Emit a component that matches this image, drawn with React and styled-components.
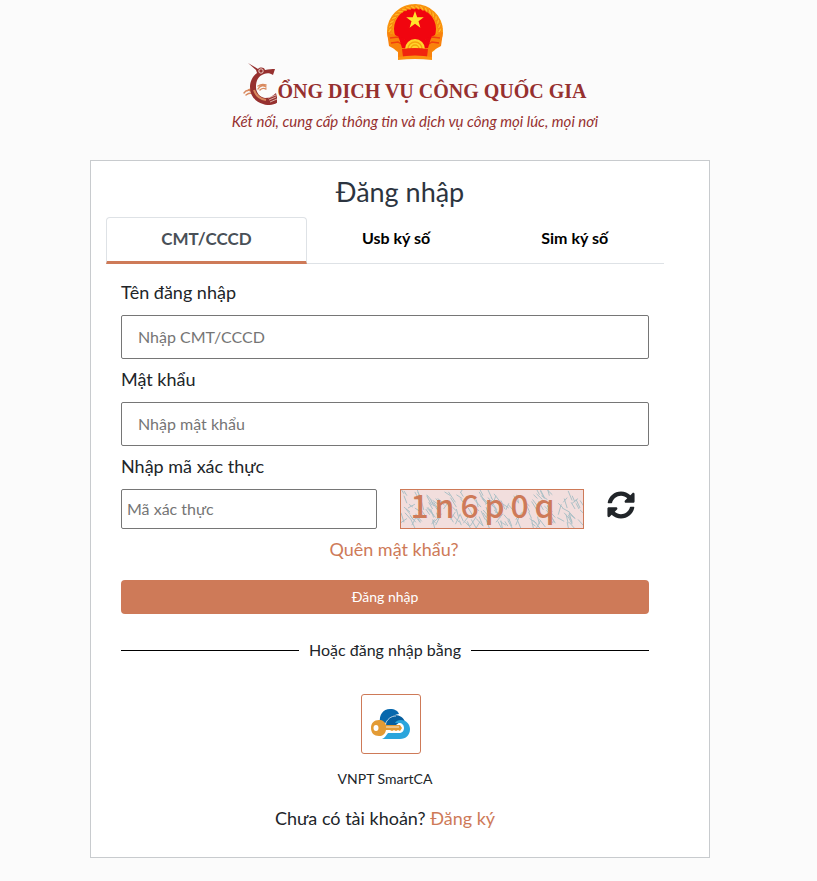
import React, { useState } from 'react'
import styled, { createGlobalStyle } from 'styled-components'
import { FaSyncAlt } from 'react-icons/fa'

const tabs = ['CMT/CCCD', 'Usb ký số', 'Sim ký số']
const captcha = '1n6p0q'

// short strokes scattered behind the captcha letters
const rand = (n) => {
  const v = Math.sin(n * 12.9898) * 43758.5453
  return v - Math.floor(v)
}
const scratches = Array.from({ length: 170 }, (_, i) => {
  const x = Math.round(rand(i + 1) * 182)
  const y = Math.round(rand(i + 301) * 38) - 3
  const dx = Math.round(2 + rand(i + 601) * 5)
  const dy = Math.round(3 + rand(i + 901) * 8)
  return `M${x} ${y}l${i % 7 === 0 ? -dx : dx} ${dy}`
}).join('')

// ears of rice on both sides of the emblem
const grains = Array.from({ length: 26 }, (_, i) => {
  const a = ((140 + i * 10.4) * Math.PI) / 180
  return { x: 29 + 25 * Math.cos(a), y: 28 + 24 * Math.sin(a), r: 140 + i * 10.4 }
})

const Emblem = () => (
  <svg width="58" height="58" viewBox="0 0 58 58" role="img" aria-label="Quốc huy">
    <ellipse cx="29" cy="28" rx="28" ry="27" fill="#fb9a0d" />
    <circle cx="29" cy="26" r="21" fill="#f1050f" />
    {grains.map((g, i) => (
      <ellipse
        key={i}
        cx={g.x}
        cy={g.y}
        rx="1.2"
        ry="3"
        fill="#ffbb22"
        stroke="#f47b10"
        strokeWidth=".7"
        transform={`rotate(${g.r + 35} ${g.x} ${g.y})`}
      />
    ))}
    <path d="M1 29l8 3 10 5 2 9h16l2-9 10-5 8-3-2 14-9 5v7l-17-2-17 2v-7l-9-5z" fill="#f9820c" />
    <path d="M4 35l8-1 8 6M5 40l7-1 8 5M54 35l-8-1-8 6M53 40l-7-1-8 5" fill="none" stroke="#f1400e" strokeWidth="1.4" />
    <path d="M12 32l9 6v7h-5zM46 32l-9 6v7h5z" fill="#f1050f" />
    <path d="M19 46a10 10 0 1 1 20 0z" fill="#ffd42a" />
    <path d="M22 46a7 7 0 1 1 14 0M25 46a4 4 0 1 1 8 0" fill="none" stroke="#f6a30d" strokeWidth="1.4" />
    <path d="M16 46q13-2 26 0l-1 8q-12-2-24 0z" fill="#f1260e" />
    <path d="M12 54q17-3 34 0v3q-17-2-34 0z" fill="#fb9310" />
    <path d="M29 8l2.2 6.300h6.600l-5.300 4 1.900 6.400-5.400-3.900-5.400 3.900 1.900-6.400-5.300-4h6.600z" fill="#ffe52c" />
  </svg>
)

const BirdLogo = () => (
  <svg width="34" height="42" viewBox="0 0 34 42" aria-hidden="true">
    <g fill="none" stroke="#d98a5f" strokeWidth="1.4" strokeLinecap="round">
      <path d="M1 30c2-3 5-3 7-2M3 32c2-2 4-2 6-2M4 28c2-2 4-2 5-1M15 26c2-4 6-4 8-2M15 23c3-2 5-2 8-1M17 27c2-2 4-2 6-1" />
    </g>
    <path d="M5 0l10 6c2-2 6-2 7 1 4-1 7-1 10-1l-2 6c-3-2-6-2-9-1-6 2-8 7-8 13 0 6 4 10 9 11 4 0 8-2 11-5l2 9c-4 3-10 4-15 2C11 38 7 32 7 24c0-6 3-11 7-14l-1-3z" fill="#96302f" />
    <circle cx="18" cy="8" r="2.2" fill="none" stroke="#f5dfd5" strokeWidth=".9" />
    <path d="M11 27c2 6 6 9 12 10" fill="none" stroke="#d98a5f" strokeWidth="2" />
    <path d="M25 35l8-3M26 37l7-3M27 39l7-3" fill="none" stroke="#f5dfd5" strokeWidth=".7" />
  </svg>
)

const SmartCaIcon = () => (
  <svg width="40" height="34" viewBox="0 0 40 34" aria-hidden="true">
    <path d="M9 15C8 8 12 2 19 2c5 0 8 2 9 5-7 1-10 5-11 10z" fill="#0768ad" />
    <path d="M15 18c1-6 4-9 9-10 5 0 9 3 10 7-3-1-6 0-9 3z" fill="#075f9f" />
    <path d="M14 18c2-6 6-9 11-9" fill="none" stroke="#fff" strokeWidth=".7" />
    <path d="M30 13c5 0 9 4 9 9 0 6-4 10-10 10H11c3-1 4-4 6-6h11c3 0 5-2 5-5s-2-5-5-5h-4c1-2 3-3 6-3z" fill="#2ba5dc" />
    <path d="M8 13c4 0 6 2 7 5h14l2 3-2 3-2-1-2 1-2-1-2 1-2-1h-4c-1 4-3 6-7 6-5 0-8-3-8-8s3-8 8-8zM5 18a2.5 3 0 1 0 0 6 2.5 3 0 0 0 0-6z" fill="#e39b35" />
    <path d="M15 20h13" stroke="#fff" strokeWidth=".8" />
  </svg>
)

export const App = () => {
  const [active, setActive] = useState(0)

  return (
    <Page>
      <GlobalStyle />
      <Header>
        <Emblem />
        <Brand>
          <BirdLogo />
          <BrandName>ỔNG DỊCH VỤ CÔNG QUỐC GIA</BrandName>
        </Brand>
        <Slogan>Kết nối, cung cấp thông tin và dịch vụ công mọi lúc, mọi nơi</Slogan>
      </Header>

      <Card>
        <Title>Đăng nhập</Title>
        <Panel>
          <TabList role="tablist">
            {tabs.map((tab, i) => (
              <Tab
                key={tab}
                type="button"
                role="tab"
                aria-selected={active === i}
                $active={active === i}
                onClick={() => setActive(i)}
              >
                {tab}
              </Tab>
            ))}
          </TabList>

          <Form onSubmit={(e) => e.preventDefault()}>
            <Label htmlFor="username">Tên đăng nhập</Label>
            <Input id="username" type="text" placeholder="Nhập CMT/CCCD" />
            <Label htmlFor="password">Mật khẩu</Label>
            <Input id="password" type="password" placeholder="Nhập mật khẩu" />
            <Label htmlFor="captcha">Nhập mã xác thực</Label>
            <CaptchaRow>
              <CaptchaInput id="captcha" type="text" placeholder="Mã xác thực" />
              <Captcha>
                <Noise viewBox="0 0 184 40" preserveAspectRatio="none" aria-hidden="true">
                  <path d={scratches} />
                </Noise>
                {captcha.split('').map((c, i) => (
                  <CaptchaChar key={i}>{c}</CaptchaChar>
                ))}
              </Captcha>
              <Refresh type="button" aria-label="Đổi mã">
                <FaSyncAlt size={28} />
              </Refresh>
            </CaptchaRow>

            <Forgot>
              <Link href="#forgot">Quên mật khẩu?</Link>
            </Forgot>
            <Submit type="submit">Đăng nhập</Submit>

            <Divider>Hoặc đăng nhập bằng</Divider>

            <Provider>
              <ProviderButton type="button" aria-label="VNPT SmartCA">
                <SmartCaIcon />
              </ProviderButton>
            </Provider>
            <ProviderName>VNPT SmartCA</ProviderName>

            <Register>
              Chưa có tài khoản? <Link href="#register">Đăng ký</Link>
            </Register>
          </Form>
        </Panel>
      </Card>
    </Page>
  )
}

export default App

const GlobalStyle = createGlobalStyle`
  *, *::before, *::after {
    box-sizing: border-box;
  }
  body {
    margin: 0;
    background: #fbfbfb;
    color: #212529;
    font-family: Lato, 'Open Sans', sans-serif;
    font-size: 18px;
    line-height: 28px;
  }
  button, input {
    font-family: inherit;
  }
`
const Page = styled.div`
  padding: 3px 17px 23px 0;
`
const Header = styled.header`
  display: flex;
  flex-direction: column;
  align-items: center;
  padding-left: 30px;
  margin-bottom: 27px;
  color: #96302f;
`
const Brand = styled.div`
  display: flex;
  align-items: flex-end;
  height: 44px;
  margin-bottom: 4px;
`
const BrandName = styled.span`
  font-family: 'Liberation Serif', serif;
  font-weight: 700;
  font-size: 20px;
  line-height: 28px;
  white-space: nowrap;
`
const Slogan = styled.p`
  margin: 0;
  font-size: 15px;
  line-height: 24px;
  font-style: italic;
`
const Card = styled.main`
  max-width: 620px;
  margin: 0 auto;
  padding: 15px 15px 24px;
  background: #fff;
  border: 1px solid #c8cbce;
`
const Title = styled.h1`
  margin: 0 0 9px;
  font-size: 27px;
  line-height: 32px;
  font-weight: 400;
  text-align: center;
  color: #2c3440;
`
const Panel = styled.div`
  margin-right: 30px;
`
const TabList = styled.div`
  display: grid;
  grid-template-columns: 36fr 32fr 32fr;
  height: 47px;
  border-bottom: 1px solid #dee2e6;
`
const Tab = styled.button`
  height: 47px;
  padding: 0 0 ${({ $active }) => ($active ? '2px' : '6px')};
  background: ${({ $active }) => ($active ? '#fff' : 'transparent')};
  border: 1px solid ${({ $active }) => ($active ? '#dee2e6' : 'transparent')};
  border-bottom: ${({ $active }) => ($active ? '3px solid #ce7a58' : '1px solid transparent')};
  border-radius: 4px 4px 0 0;
  color: ${({ $active }) => ($active ? '#495057' : '#000')};
  font-size: ${({ $active }) => ($active ? '17px' : '16px')};
  font-weight: 700;
  cursor: pointer;
`
const Form = styled.form`
  display: flex;
  flex-direction: column;
  padding: 8px 15px 0;
`
const Label = styled.label`
  margin: 6px 0 9px;
`
const Input = styled.input`
  width: 100%;
  height: 44px;
  padding: 0 16px 2px;
  border: 1px solid #767676;
  border-radius: 2px;
  font-size: 16px;
  &::placeholder {
    color: #757575;
  }
`
const CaptchaRow = styled.div`
  display: flex;
  align-items: flex-start;
  gap: 23px;
`
const CaptchaInput = styled(Input)`
  flex: 1;
  min-width: 0;
  height: 40px;
  padding: 0 5px 2px;
`
const Captcha = styled.div`
  position: relative;
  display: flex;
  flex: 0 0 184px;
  height: 40px;
  padding-left: 6px;
  background: #f2dedd;
  border: 1px solid #ce7a58;
`
const Noise = styled.svg`
  position: absolute;
  inset: 0;
  width: 100%;
  height: 100%;
  fill: none;
  stroke: #a9bfc5;
`
const CaptchaChar = styled.span`
  position: relative;
  flex: 0 0 25px;
  text-align: center;
  font-family: 'Noto Sans CJK JP', sans-serif;
  font-weight: 500;
  font-size: 32px;
  line-height: 28px;
  color: #ce7a58;
`
const Refresh = styled.button`
  display: flex;
  padding: 2px 0;
  margin-right: 14px;
  background: none;
  border: 0;
  color: #212529;
  cursor: pointer;
`
const Link = styled.a`
  color: #ce7a58;
  text-decoration: none;
`
const Forgot = styled.div`
  margin: 6px 0 17px;
  padding-left: 18px;
  text-align: center;
`
const Submit = styled.button`
  height: 34px;
  padding: 0 0 2px;
  border: 0;
  border-radius: 4px;
  background: #ce7a58;
  color: #fff;
  font-size: 14px;
  cursor: pointer;
`
const Divider = styled.div`
  display: flex;
  align-items: center;
  gap: 10px;
  margin: 24px 0 32px;
  font-size: 16px;
  line-height: 24px;
  &::before, &::after {
    content: '';
    flex: 1;
    height: 1px;
    background: #000;
  }
`
const Provider = styled.div`
  display: flex;
  justify-content: center;
  padding-left: 12px;
`
const ProviderButton = styled.button`
  display: flex;
  align-items: center;
  justify-content: center;
  width: 60px;
  height: 60px;
  padding: 0;
  background: #fff;
  border: 1px solid #ce7a58;
  border-radius: 3px;
  cursor: pointer;
`
const ProviderName = styled.span`
  margin: 15px 0;
  font-size: 14px;
  line-height: 20px;
  text-align: center;
`
const Register = styled.div`
  margin-bottom: 1px;
  text-align: center;
`
